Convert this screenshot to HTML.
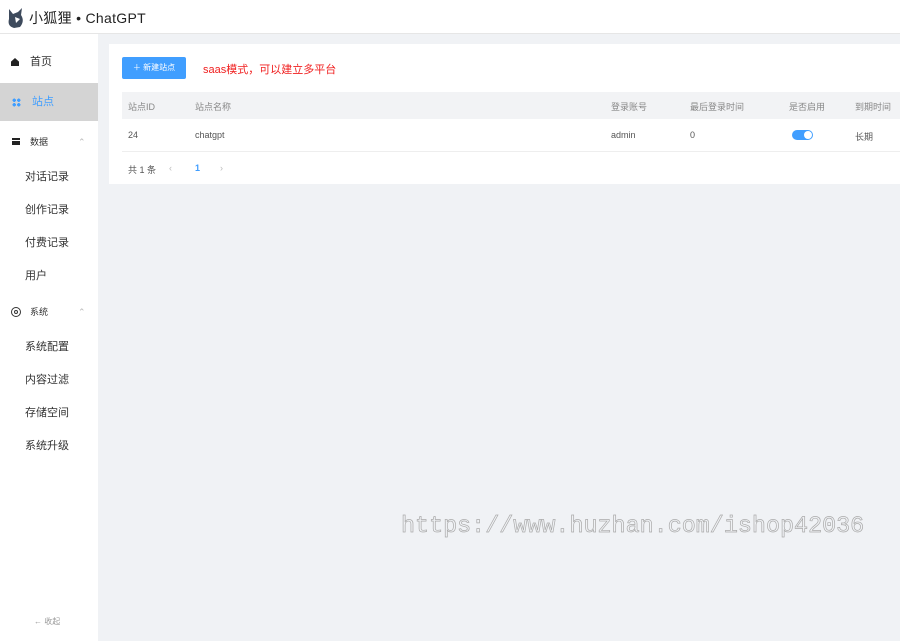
<!DOCTYPE html>
<html><head><meta charset="utf-8"><style>
*{margin:0;padding:0;box-sizing:border-box}
body{width:900px;height:641px;overflow:hidden;background:#f0f2f5;font-family:"Liberation Sans","Noto Sans CJK SC",sans-serif;position:relative;color:#333}
.hdr{position:absolute;left:0;top:0;width:900px;height:34px;background:#fff;border-bottom:1px solid #e6e6e6}
.logo{position:absolute;left:6px;top:7px;width:20px;height:22px}
.title{position:absolute;left:29px;top:8px;font-size:14px;color:#222;letter-spacing:0.3px}
.side{position:absolute;left:0;top:34px;width:98px;height:607px;background:#fff}
.it{position:absolute;left:0;width:98px;font-size:11px;color:#333}
.card{position:absolute;left:109px;top:44px;width:791px;height:140px;background:#fff}
.btn{position:absolute;left:13px;top:13px;width:64px;height:22px;background:#409eff;border-radius:2px;color:#fff;font-size:8px;line-height:22px;text-align:center}
.note{position:absolute;left:94px;top:17px;color:#f02020;font-size:11px}
.th{position:absolute;left:13px;top:48px;width:778px;height:27px;background:#f2f3f5}
.t{position:absolute;font-size:9px;color:#888}
.r{position:absolute;font-size:9px;color:#555}
.wm{position:absolute;left:401px;top:514px;font-family:"Liberation Mono",monospace;font-size:23.4px;color:transparent;-webkit-text-stroke:0.7px #aaa;white-space:nowrap}
</style></head><body>
<div class="hdr">
<svg class="logo" viewBox="0 0 20 22"><path d="M3 2 L7 7 L12 5 L16 1 L15 8 Q19 14 14 20 L8 21 Q1 19 3 12 Z" fill="#3d4a5c"/><path d="M9 10 L14 12 L10 16 Z" fill="#fff"/></svg>
<div class="title">小狐狸 • ChatGPT</div>
</div>
<div class="side">
<div class="it" style="top:18px;height:20px;line-height:20px"><span style="position:absolute;left:11px;top:6px;width:8px;height:8px;background:#222;clip-path:polygon(50% 0,100% 45%,100% 100%,0 100%,0 45%)"></span><span style="position:absolute;left:30px">首页</span></div>
<div class="it" style="top:49px;height:38px;background:#d4d4d4;line-height:38px;color:#409eff"><span style="position:absolute;left:12px;top:15px;width:9px;height:9px;background:radial-gradient(circle,#409eff 1.6px,transparent 1.8px) 0 0/4.5px 4.5px"></span><span style="position:absolute;left:32px">站点</span></div>
<div class="it" style="top:98px;height:20px;line-height:20px;font-size:9px"><span style="position:absolute;left:12px;top:6px;width:8px;height:7px;border-top:2px solid #222;border-bottom:2px solid #222"></span><span style="position:absolute;left:12px;top:9px;width:8px;height:2px;background:#222"></span><span style="position:absolute;left:30px">数据</span><span style="position:absolute;left:78px;color:#bbb">⌃</span></div>
<div class="it" style="top:134px;left:25px">对话记录</div>
<div class="it" style="top:167px;left:25px">创作记录</div>
<div class="it" style="top:200px;left:25px">付费记录</div>
<div class="it" style="top:233px;left:25px">用户</div>
<div class="it" style="top:268px;height:20px;line-height:20px;font-size:9px"><span style="position:absolute;left:11px;top:5px;width:10px;height:10px;border:1.5px solid #333;border-radius:50%"></span><span style="position:absolute;left:14px;top:8px;width:4px;height:4px;border:1px solid #333;border-radius:50%"></span><span style="position:absolute;left:30px">系统</span><span style="position:absolute;left:78px;color:#bbb">⌃</span></div>
<div class="it" style="top:304px;left:25px">系统配置</div>
<div class="it" style="top:337px;left:25px">内容过滤</div>
<div class="it" style="top:370px;left:25px">存储空间</div>
<div class="it" style="top:403px;left:25px">系统升级</div>
<div class="it" style="top:582px;left:34px;font-size:8px;color:#999">← 收起</div>
</div>
<div class="card">
<div class="btn">＋ 新建站点</div>
<div class="note">saas模式，可以建立多平台</div>
<div class="th"></div>
<div class="t" style="left:19px;top:56px">站点ID</div>
<div class="t" style="left:86px;top:56px">站点名称</div>
<div class="t" style="left:502px;top:56px">登录账号</div>
<div class="t" style="left:581px;top:56px">最后登录时间</div>
<div class="t" style="left:680px;top:56px">是否启用</div>
<div class="t" style="left:746px;top:56px">到期时间</div>
<div class="r" style="left:19px;top:86px">24</div>
<div class="r" style="left:86px;top:86px">chatgpt</div>
<div class="r" style="left:502px;top:86px">admin</div>
<div class="r" style="left:581px;top:86px">0</div>
<div style="position:absolute;left:683px;top:86px;width:21px;height:10px;border-radius:5px;background:#409eff"><div style="position:absolute;right:1px;top:1px;width:8px;height:8px;border-radius:50%;background:#fff"></div></div>
<div class="r" style="left:746px;top:86px">长期</div>
<div style="position:absolute;left:13px;top:107px;width:778px;height:1px;background:#eee"></div>
<div class="r" style="left:19px;top:119px">共 1 条</div>
<div class="r" style="left:60px;top:119px;color:#bbb">‹</div>
<div class="r" style="left:86px;top:119px;color:#409eff;font-weight:bold">1</div>
<div class="r" style="left:111px;top:119px;color:#bbb">›</div>
</div>
<div class="wm">https://www.huzhan.com/ishop42036</div>
</body></html>
